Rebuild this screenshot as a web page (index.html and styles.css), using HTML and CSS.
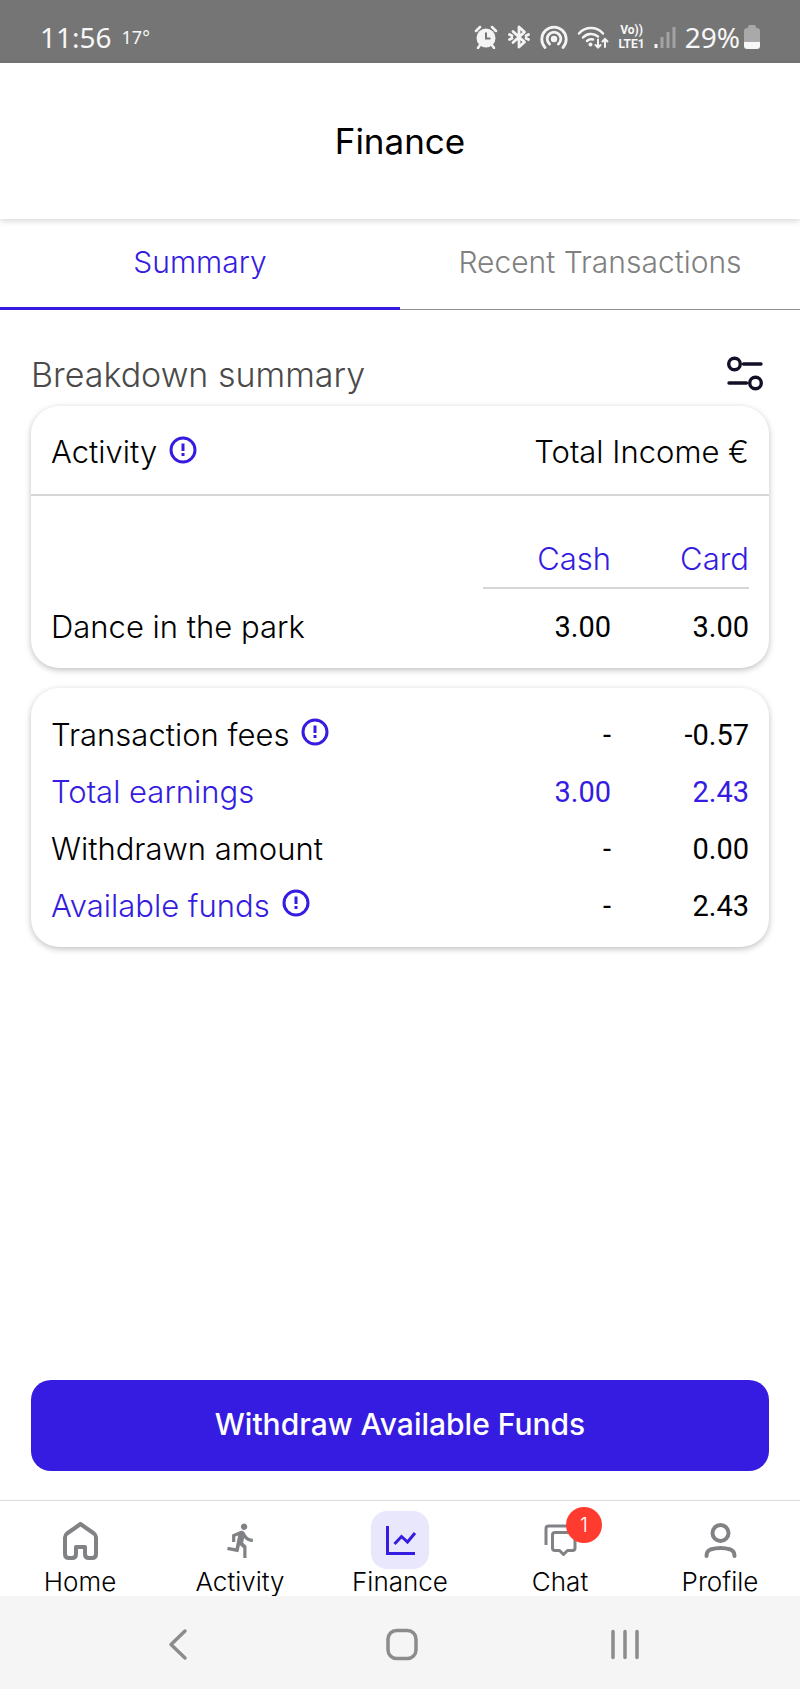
FILE: index.html
```html
<!DOCTYPE html>
<html lang="en">
<head>
<meta charset="utf-8">
<meta name="viewport" content="width=device-width, initial-scale=1">
<title>Finance</title>
<link rel="stylesheet" href="styles.css">
</head>
<body>
<div class="status">
  <span class="status-time">11:56</span>
  <span class="status-temp">17°</span>
  <div class="status-icons">
    <svg width="24" height="24" viewBox="0 0 24 24" aria-hidden="true"><circle cx="12" cy="13" r="9.500" fill="#f4f4f4"/><path d="M2 6l4-4M22 6l-4-4M6 20l-2 3M18 20l2 3" stroke="#f4f4f4" stroke-width="2.500" stroke-linecap="round"/><path d="M12 7.500v6h4.500" fill="none" stroke="#757575" stroke-width="2"/></svg>
    <svg width="24" height="24" viewBox="0 0 24 24" fill="none" stroke="#f4f4f4" stroke-width="2.800" stroke-linejoin="round" stroke-linecap="round" aria-hidden="true"><path d="M6 6.500L17.500 17 12 22V2l5.500 5L6 17.500"/><path d="M2.500 9.500l2.500 1.200M2.500 14.500l2.500-1.200M21.500 9.500L19 10.700M21.500 14.500L19 13.300"/></svg>
    <svg width="28" height="24" viewBox="0 0 28 24" fill="none" stroke="#f4f4f4" stroke-width="2.800" stroke-linecap="round" aria-hidden="true"><circle cx="14" cy="14" r="3.200" fill="#f4f4f4" stroke="none"/><path d="M9.500 19a6.800 6.800 0 1 1 9 0M5 22.500a12.200 12.200 0 1 1 18 0"/></svg>
    <svg width="32" height="24" viewBox="0 0 32 24" fill="none" stroke="#f4f4f4" stroke-width="2.500" stroke-linecap="round" aria-hidden="true"><path d="M2 8.500a16 16 0 0 1 24 0M6 12.500a11 11 0 0 1 15-1M10 16a6 6 0 0 1 6-1.500"/><circle cx="13.500" cy="19.500" r="2" fill="#f4f4f4" stroke="none"/><path d="M21 14.500v8m-2.500-2.500l2.500 2.500 2.500-2.500M28 22v-8m-2.500 2.500L28 14l2.500 2.500" stroke-width="2"/></svg>
    <span class="volte"><span>Vo))</span><span>LTE1</span></span>
    <svg width="22" height="24" viewBox="0 0 22 24" stroke-width="3" aria-hidden="true"><path d="M2 23v-4" stroke="#f4f4f4"/><path d="M8 23V12M14 23V7M20 23V2" stroke="#a3a3a3"/></svg>
    <span class="status-percent">29%</span>
    <svg class="battery" width="16" height="24" viewBox="0 0 16 24" aria-hidden="true"><path d="M4 3V2q0-2 2-2h4q2 0 2 2v1h1q3 0 3 3v11H0V6q0-3 3-3z" fill="#a9a9a9"/><path d="M0 17h16v4q0 3-3 3H3q-3 0-3-3z" fill="#f7f7f7"/></svg>
  </div>
</div>
<header class="header"><h1>Finance</h1></header>
<nav class="tabs" aria-label="Finance views">
  <a class="tab tab-active" href="#summary" aria-current="page">Summary</a>
  <a class="tab" href="#transactions">Recent Transactions</a>
</nav>
<main class="main" id="summary">
  <div class="section-head">
    <h2>Breakdown summary</h2>
    <button class="icon-button" type="button" aria-label="Filter">
      <svg width="36" height="36" viewBox="0 0 36 36" fill="none" stroke="#130f26" stroke-width="3.400" stroke-linecap="round"><circle cx="7.500" cy="8" r="5.800"/><path d="M16.500 8H34M2 27h17.500"/><circle cx="28.500" cy="27" r="5.800"/></svg>
    </button>
  </div>
  <section class="card">
    <div class="card-head">
      <span class="label">Activity
        <button class="icon-button info" type="button" aria-label="About activity"><svg width="28" height="28" viewBox="0 0 28 28" fill="none" stroke="#351ce0" stroke-width="3"><circle cx="14" cy="14" r="12"/><path d="M14 7.500v7.500M14 17v3"/></svg></button>
      </span>
      <span>Total Income €</span>
    </div>
    <table class="amounts income">
      <thead><tr><td></td><th scope="col">Cash</th><th scope="col">Card</th></tr></thead>
      <tbody><tr><th scope="row">Dance in the park</th><td>3.00</td><td>3.00</td></tr></tbody>
    </table>
  </section>
  <section class="card">
    <table class="amounts totals">
      <tbody>
        <tr><th scope="row"><span class="label">Transaction fees
          <button class="icon-button info" type="button" aria-label="About transaction fees"><svg width="28" height="28" viewBox="0 0 28 28" fill="none" stroke="#351ce0" stroke-width="3"><circle cx="14" cy="14" r="12"/><path d="M14 7.500v7.500M14 17v3"/></svg></button></span></th><td>-</td><td>-0.57</td></tr>
        <tr class="accent"><th scope="row">Total earnings</th><td>3.00</td><td>2.43</td></tr>
        <tr><th scope="row">Withdrawn amount</th><td>-</td><td>0.00</td></tr>
        <tr><th scope="row" class="accent"><span class="label">Available funds
          <button class="icon-button info" type="button" aria-label="About available funds"><svg width="28" height="28" viewBox="0 0 28 28" fill="none" stroke="#351ce0" stroke-width="3"><circle cx="14" cy="14" r="12"/><path d="M14 7.500v7.500M14 17v3"/></svg></button></span></th><td>-</td><td>2.43</td></tr>
      </tbody>
    </table>
  </section>
  <button class="withdraw" type="button">Withdraw Available Funds</button>
</main>
<nav class="bottom-nav" aria-label="Main">
  <a href="#home"><span class="nav-icon"><svg width="58" height="58" viewBox="0 0 58 58" fill="none" stroke="#808285" stroke-width="4" stroke-linejoin="round" aria-hidden="true"><path d="M29.500 13L16 22.500Q14 24 14 26.500V43q0 4 4 4h3q4 0 4-4v-7h9v7q0 4 4 4h3q4 0 4-4V26.500q0-2.500-2-4z"/></svg></span>Home</a>
  <a href="#activity"><span class="nav-icon"><svg width="58" height="58" viewBox="0 0 58 58" aria-hidden="true"><path transform="translate(11.500 10.200) scale(1.600)" fill="#808285" d="M13.490 5.480c1.100 0 2-.9 2-2s-.9-2-2-2-2 .9-2 2 .9 2 2 2zm-3.600 13.900l1-4.400 2.100 2v6h2v-7.500l-2.100-2 .6-3c1.300 1.500 3.300 2.500 5.500 2.500v-2c-1.900 0-3.500-1-4.300-2.400l-1-1.600c-.4-.6-1-1-1.700-1-.3 0-.5.1-.8.1l-5.200 2.200v4.700h2v-3.400l1.800-.7-1.600 8.100-4.900-1-.4 2 7 1.400z"/></svg></span>Activity</a>
  <a href="#finance" aria-current="page"><span class="nav-icon nav-icon-active"><svg width="58" height="58" viewBox="0 0 58 58" fill="none" stroke="#351ce0" stroke-width="3" aria-hidden="true"><path d="M16.500 15v27.500H44M23.500 33l7-7.500 6 5.500L44 22"/></svg></span>Finance</a>
  <a href="#chat"><span class="nav-icon"><svg width="58" height="58" viewBox="0 0 58 58" fill="none" stroke="#808285" stroke-width="3" stroke-linejoin="round" aria-hidden="true"><path d="M15 34V17.500q0-2.500 2.500-2.500H40"/><path d="M24 21.500h17.500q2.500 0 2.500 2.500v13q0 2.500-2.500 2.500h-5l-4 4-4-4H24q-2.500 0-2.500-2.500V24q0-2.500 2.500-2.500z"/></svg><span class="badge">1</span></span>Chat</a>
  <a href="#profile"><span class="nav-icon"><svg width="58" height="58" viewBox="0 0 58 58" fill="none" stroke="#808285" stroke-width="4" stroke-linecap="round" aria-hidden="true"><circle cx="29.500" cy="22" r="8"/><path d="M15.500 45q0-5 4-6.500 10-3 20 0 4 1.500 4 6.500"/></svg></span>Profile</a>
</nav>
<div class="system-bar">
  <button class="icon-button" type="button" aria-label="Back"><svg width="36" height="36" viewBox="0 0 36 36" fill="none" stroke="#8c8c8c" stroke-width="3.500" stroke-linecap="round" stroke-linejoin="round"><path d="M25 5L11 18.500 25 32"/></svg></button>
  <button class="icon-button" type="button" aria-label="Home screen"><svg width="36" height="36" viewBox="0 0 36 36" fill="none" stroke="#8c8c8c" stroke-width="3.500"><rect x="4" y="4.500" width="28" height="28" rx="8.500"/></svg></button>
  <button class="icon-button" type="button" aria-label="Recent apps"><svg width="36" height="36" viewBox="0 0 36 36" stroke="#8c8c8c" stroke-width="3.500" stroke-linecap="round"><path d="M6 5.500v26M18 5.500v26M30 5.500v26"/></svg></button>
</div>
</body>
</html>
```
FILE: styles.css
```css
* { box-sizing: border-box; }

body {
  margin: 0;
  min-height: 100vh;
  display: flex;
  flex-direction: column;
  background: #fff;
  color: #000;
  font-family: "Inter", "Open Sans", sans-serif;
  font-size: 31px;
  font-weight: 300;
  line-height: 36px;
}

h1, h2 { margin: 0; }

a { color: inherit; text-decoration: none; }

button { font: inherit; border: 0; cursor: pointer; }

.icon-button {
  display: flex;
  padding: 0;
  background: none;
}

.status {
  display: flex;
  align-items: center;
  height: 63px;
  padding: 11px 40px 0;
  background: #757575;
  color: #f7f7f7;
  font-family: "Noto Sans", "Open Sans", sans-serif;
  font-size: 28px;
  font-weight: 400;
}

.status-temp { margin-left: 10px; font-size: 18px; }

.status-icons {
  display: flex;
  align-items: center;
  gap: 9px;
  margin-left: auto;
}

.volte {
  display: flex;
  flex-direction: column;
  align-items: center;
  font-family: "Roboto", sans-serif;
  font-size: 12px;
  font-weight: 700;
  line-height: 14px;
}

.battery { margin-left: -5px; }

.header {
  display: flex;
  align-items: center;
  justify-content: center;
  height: 156px;
  box-shadow: 0 2px 6px rgba(0, 0, 0, 0.16);
}

.header h1 { font-size: 35px; font-weight: 400; }

.tabs { display: flex; height: 91px; font-size: 30px; }

.tab {
  flex: 1;
  padding-top: 25px;
  border-bottom: 1px solid #8e8e93;
  color: #808080;
  text-align: center;
}

.tab-active { border-bottom: 3px solid #351ce0; color: #351ce0; }

.main {
  flex: 1;
  display: flex;
  flex-direction: column;
  padding: 44px 31px 29px;
}

.section-head {
  display: flex;
  align-items: center;
  justify-content: space-between;
  height: 52px;
  padding: 0 6px 10px 0;
}

.section-head h2 { color: #4a4a4a; font-size: 34px; font-weight: 300; }

.section-head .icon-button { padding-bottom: 2px; }

.card {
  margin-bottom: 20px;
  border-radius: 28px;
  background: #fff;
  box-shadow: 0 2px 6px rgba(0, 0, 0, 0.25);
}

.card-head {
  display: flex;
  align-items: center;
  justify-content: space-between;
  height: 90px;
  padding: 4px 20px 0;
  border-bottom: 2px solid #d6d6d6;
}

.label { display: inline-flex; align-items: center; gap: 12px; }

.info { padding-bottom: 5px; }

.accent { color: #351ce0; }

.amounts {
  width: 100%;
  padding: 0 20px;
  border-spacing: 0;
  table-layout: fixed;
}

.amounts th,
.amounts td {
  height: 57px;
  padding: 0;
  font-weight: 300;
  text-align: right;
}

.amounts tbody td {
  font-family: "Roboto", sans-serif;
  font-size: 29px;
  font-weight: 400;
}

.amounts tr > :first-child { text-align: left; }

.amounts tr > :nth-child(2) { width: 128px; }

.amounts tr > :nth-child(3) { width: 138px; }

.income { padding-top: 32px; padding-bottom: 4px; }

.income thead { color: #351ce0; }

.income thead th {
  height: 61px;
  background: linear-gradient(#d6d6d6, #d6d6d6) left bottom / 100% 2px no-repeat;
}

.income tbody tr > * { height: 75px; }

.totals { padding-top: 18px; padding-bottom: 13px; }

.withdraw {
  margin-top: auto;
  height: 91px;
  padding-bottom: 4px;
  border-radius: 20px;
  background: #351ce0;
  color: #fff;
  font-size: 30px;
  font-weight: 500;
}

.bottom-nav {
  display: grid;
  grid-template-columns: repeat(5, 1fr);
  height: 96px;
  padding-top: 10px;
  border-top: 1px solid #dcdcdc;
  font-size: 26px;
  line-height: 26px;
}

.bottom-nav a {
  display: flex;
  flex-direction: column;
  align-items: center;
}

.nav-icon {
  position: relative;
  display: flex;
  height: 58px;
  border-radius: 16px;
}

.nav-icon-active { background: #e9e7fb; }

.badge {
  position: absolute;
  top: -4px;
  left: 35px;
  width: 36px;
  height: 36px;
  border-radius: 50%;
  background: #ff3b30;
  color: #fff;
  font-size: 20px;
  line-height: 36px;
  text-align: center;
}

.system-bar {
  display: grid;
  grid-template-columns: repeat(3, 28%);
  justify-content: center;
  align-items: center;
  justify-items: center;
  height: 93px;
  padding: 3px 0 0 3px;
  background: #f5f5f5;
}
```
